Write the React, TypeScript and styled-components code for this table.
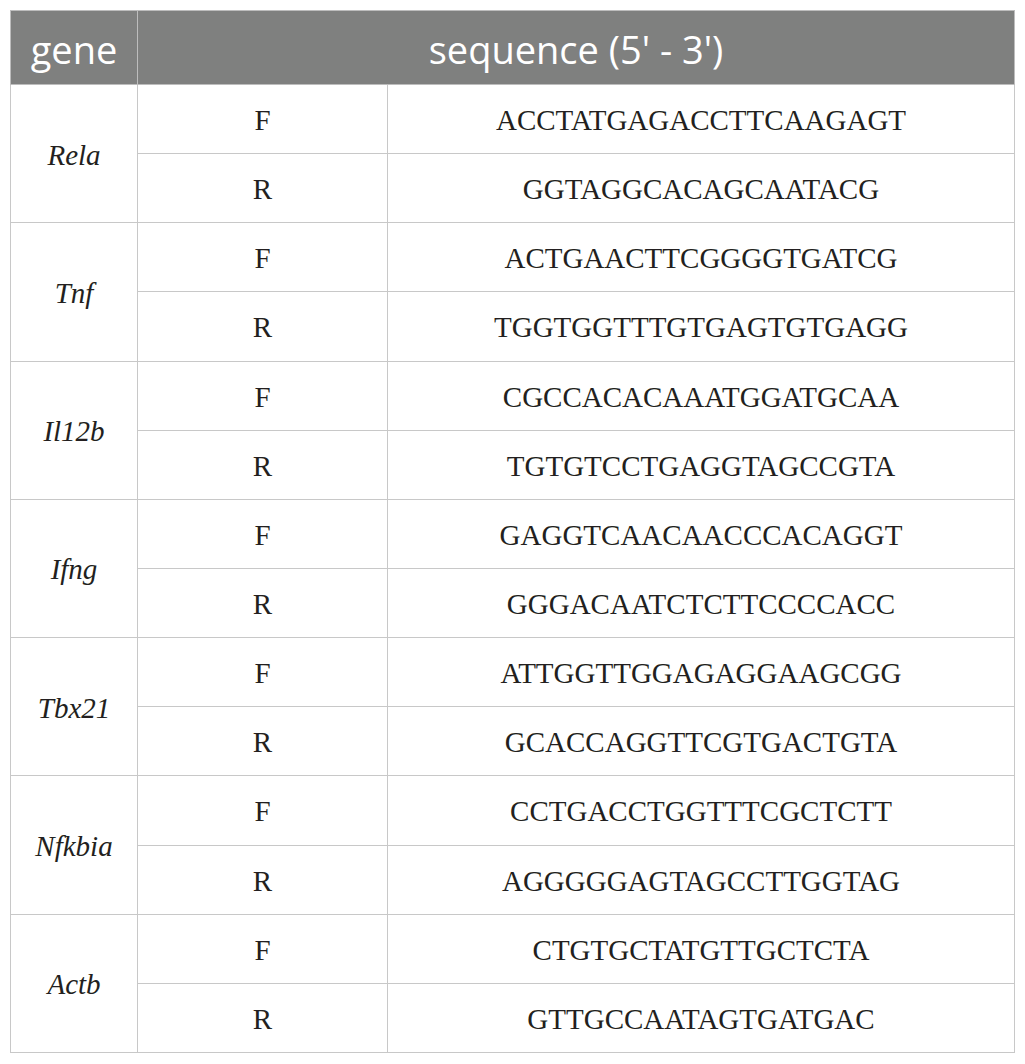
import React from "react";
import styled, { createGlobalStyle } from "styled-components";

const Global = createGlobalStyle`
  html, body { margin: 0; padding: 0; background: #ffffff; }
  body { font-family: "Liberation Serif", "Times New Roman", serif; }
`;

const Wrap = styled.div`
  padding: 10px 0 0 10px;
`;

const Table = styled.table`
  border-collapse: collapse;
  width: 1004px;
  table-layout: fixed;
  border: 1px solid #c4c4c4;
`;

const HeadCell = styled.th`
  background: #7f807f;
  color: #ffffff;
  font-family: "Open Sans", "Noto Sans", sans-serif;
  font-weight: 400;
  font-size: 38px;
  line-height: 1;
  height: 74px;
  padding: 2px 0 0 0;
  box-sizing: border-box;
  text-align: center;
  border: 1px solid #bdbdbd;
`;

const Cell = styled.td<{ $italic?: boolean }>`
  height: 69.15px;
  padding: 3px 0 0 0;
  box-sizing: border-box;
  text-align: center;
  vertical-align: middle;
  font-family: "Liberation Serif", "Times New Roman", serif;
  font-size: 29px;
  font-style: ${(p) => (p.$italic ? "italic" : "normal")};
  color: #231f20;
  border: 1px solid #c8c8c8;
  line-height: 1;
`;

const data: [string, string, string][] = [
  ["Rela", "ACCTATGAGACCTTCAAGAGT", "GGTAGGCACAGCAATACG"],
  ["Tnf", "ACTGAACTTCGGGGTGATCG", "TGGTGGTTTGTGAGTGTGAGG"],
  ["Il12b", "CGCCACACAAATGGATGCAA", "TGTGTCCTGAGGTAGCCGTA"],
  ["Ifng", "GAGGTCAACAACCCACAGGT", "GGGACAATCTCTTCCCCACC"],
  ["Tbx21", "ATTGGTTGGAGAGGAAGCGG", "GCACCAGGTTCGTGACTGTA"],
  ["Nfkbia", "CCTGACCTGGTTTCGCTCTT", "AGGGGGAGTAGCCTTGGTAG"],
  ["Actb", "CTGTGCTATGTTGCTCTA", "GTTGCCAATAGTGATGAC"],
];

export default function App() {
  return (
    <>
      <Global />
      <Wrap>
        <Table>
          <colgroup>
            <col style={{ width: 127 }} />
            <col style={{ width: 250 }} />
            <col style={{ width: 627 }} />
          </colgroup>
          <thead>
            <tr>
              <HeadCell>gene</HeadCell>
              <HeadCell colSpan={2}>sequence (5' - 3')</HeadCell>
            </tr>
          </thead>
          <tbody>
            {data.map(([gene, f, r]) => (
              <React.Fragment key={gene}>
                <tr>
                  <Cell $italic rowSpan={2}>{gene}</Cell>
                  <Cell>F</Cell>
                  <Cell>{f}</Cell>
                </tr>
                <tr>
                  <Cell>R</Cell>
                  <Cell>{r}</Cell>
                </tr>
              </React.Fragment>
            ))}
          </tbody>
        </Table>
      </Wrap>
    </>
  );
}
